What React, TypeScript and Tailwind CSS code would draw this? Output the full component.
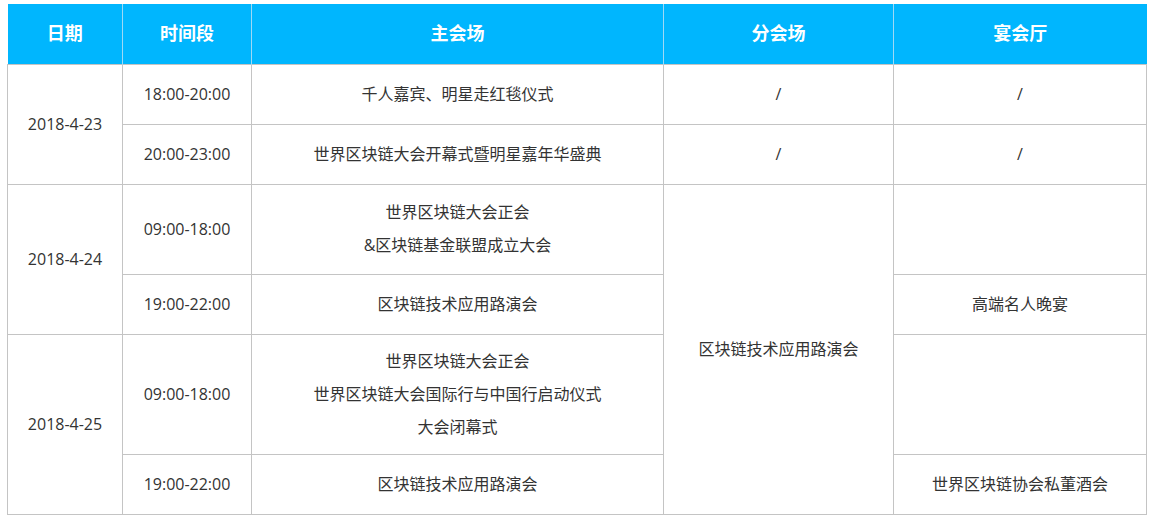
import React from 'react'

// ─── Data ─────────────────────────────────────────────────────────────────────

const headers = ['日期', '时间段', '主会场', '分会场', '宴会厅']

const cell = 'border border-[#c4c4c4] text-center align-middle px-2'

export default function App() {
  return (
    <div
      className="pt-[4px] pl-[7px] pr-[5px] bg-white min-h-screen text-[16px] text-[#333]"
      style={{ fontFamily: '"Open Sans", "Noto Sans CJK SC", sans-serif' }}
    >
      <table className="w-[1139px] border-collapse table-fixed">
        <colgroup>
          <col className="w-[115px]" />
          <col className="w-[129px]" />
          <col className="w-[412px]" />
          <col className="w-[230px]" />
          <col className="w-[253px]" />
        </colgroup>
        <thead>
          <tr className="h-[60px] bg-[#00b6fe]">
            {headers.map((h, i) => (
              <th
                key={h}
                className={[
                  'text-white font-bold text-[18px] align-middle',
                  i > 0 ? 'border-l border-[#9ed9f5]' : '',
                ].join(' ')}
              >
                {h}
              </th>
            ))}
          </tr>
        </thead>
        <tbody className="leading-[33px]">
          <tr className="h-[60px]">
            <td rowSpan={2} className={cell}>2018-4-23</td>
            <td className={cell}>18:00-20:00</td>
            <td className={cell}>千人嘉宾、明星走红毯仪式</td>
            <td className={cell}>/</td>
            <td className={cell}>/</td>
          </tr>
          <tr className="h-[60px]">
            <td className={cell}>20:00-23:00</td>
            <td className={cell}>世界区块链大会开幕式暨明星嘉年华盛典</td>
            <td className={cell}>/</td>
            <td className={cell}>/</td>
          </tr>
          <tr className="h-[90px]">
            <td rowSpan={2} className={cell}>2018-4-24</td>
            <td className={cell}>09:00-18:00</td>
            <td className={cell}>
              世界区块链大会正会
              <br />
              &amp;区块链基金联盟成立大会
            </td>
            <td rowSpan={4} className={cell}>区块链技术应用路演会</td>
            <td className={cell}></td>
          </tr>
          <tr className="h-[60px]">
            <td className={cell}>19:00-22:00</td>
            <td className={cell}>区块链技术应用路演会</td>
            <td className={cell}>高端名人晚宴</td>
          </tr>
          <tr className="h-[120px]">
            <td rowSpan={2} className={cell}>2018-4-25</td>
            <td className={cell}>09:00-18:00</td>
            <td className={cell}>
              世界区块链大会正会
              <br />
              世界区块链大会国际行与中国行启动仪式
              <br />
              大会闭幕式
            </td>
            <td className={cell}></td>
          </tr>
          <tr className="h-[60px]">
            <td className={cell}>19:00-22:00</td>
            <td className={cell}>区块链技术应用路演会</td>
            <td className={cell}>世界区块链协会私董酒会</td>
          </tr>
        </tbody>
      </table>
    </div>
  )
}
